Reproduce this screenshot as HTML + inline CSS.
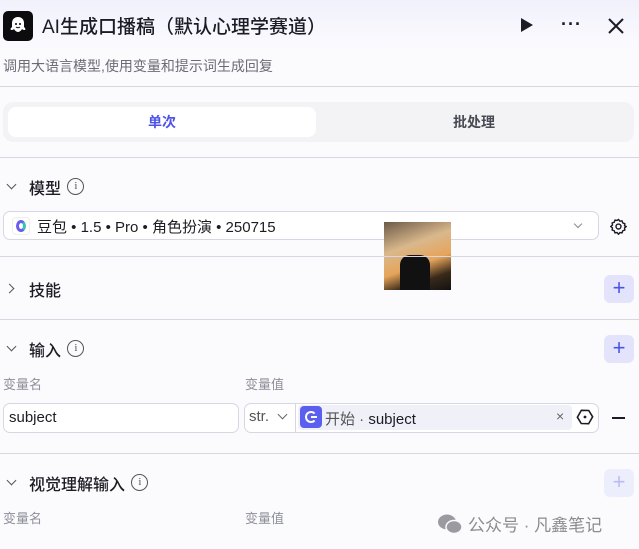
<!DOCTYPE html>
<html><head><meta charset="utf-8"><style>
*{margin:0;padding:0;box-sizing:border-box}
body{width:639px;height:549px;overflow:hidden;background:#fbfbfe;font-family:"Liberation Sans","Noto Sans CJK SC",sans-serif;color:#1d1c24;position:relative}
.a{position:absolute}
.hr{position:absolute;left:0;width:639px;height:1px;background:#d6d7e3}
.sec{font-size:16px;font-weight:500;color:#1d1c24}
.info{display:inline-block;width:17px;height:17px;border:1.3px solid #555;border-radius:50%;font-size:11px;text-align:center;line-height:14px;color:#555;font-family:"Liberation Serif",serif;vertical-align:middle;position:relative;top:-3px;margin-left:2px}
.plus{position:absolute;width:30px;height:28px;border-radius:6px;background:#e3e4fb;color:#4d53e8;font-size:22px;line-height:26px;text-align:center}
.lbl{font-size:13px;color:#8f8f99}
.chev{position:absolute;width:7px;height:7px;border-right:1.8px solid #555;border-bottom:1.8px solid #555}
</style></head><body>
<div class="a" style="left:0;top:0;width:639px;height:50px;background:linear-gradient(#f1f1fc,#fbfbfe)"></div>
<div class="a" style="left:3px;top:11px;width:30px;height:30px;background:#0c0c0f;border-radius:5px"></div>
<svg class="a" style="left:8px;top:15px" width="20" height="22" viewBox="0 0 20 22"><path d="M10 2c-4 0-6 3-6 6v4c-1 1-2 2-1 3 1 0 2 0 3-1 1 2 3 3 4 3s3-1 4-3c1 1 2 1 3 1 1-1 0-2-1-3V8c0-3-2-6-6-6z" fill="#fff"/><circle cx="8" cy="9" r="1" fill="#000"/><circle cx="12" cy="9" r="1" fill="#000"/><path d="M8 12q2 1.5 4 0" stroke="#000" fill="none"/></svg>
<div class="a" style="left:42px;top:12px;font-size:19px;font-weight:500;color:#1d1c24">AI生成口播稿（默认心理学赛道）</div>
<svg class="a" style="left:519px;top:17px" width="16" height="16"><path d="M2 1L14 8L2 15Z" fill="#1d1c24"/></svg>
<div class="a" style="left:561px;top:14px;font-size:18px;letter-spacing:1px;color:#1d1c24;font-weight:bold">···</div>
<svg class="a" style="left:608px;top:18px" width="16" height="16"><path d="M1 1L15 15M15 1L1 15" stroke="#1d1c24" stroke-width="2"/></svg>
<div class="a" style="left:3px;top:56px;font-size:14px;color:#6b6b75">调用大语言模型,使用变量和提示词生成回复</div>
<div class="hr" style="top:86px"></div>
<div class="a" style="left:3px;top:102px;width:631px;height:40px;border-radius:10px;background:#f3f3f6"></div>
<div class="a" style="left:8px;top:107px;width:308px;height:30px;border-radius:8px;background:#fff;text-align:center;line-height:30px;font-size:14px;font-weight:bold;color:#4d53e8">单次</div>
<div class="a" style="left:320px;top:107px;width:308px;height:30px;text-align:center;line-height:30px;font-size:14px;font-weight:bold;color:#4a4a55">批处理</div>
<div class="hr" style="top:157px"></div>
<div class="chev" style="left:8px;top:181px;transform:rotate(45deg)"></div>
<div class="a sec" style="left:29px;top:175px">模型 <span class="info">i</span></div>
<div class="a" style="left:3px;top:211px;width:596px;height:29px;border:1px solid #d6d7e3;border-radius:7px;background:#fff"></div>
<div class="a" style="left:12px;top:217px;width:18px;height:18px;border-radius:4px;background:#fff;border:1px solid #eee"></div>
<div class="a" style="left:16px;top:220px;width:10px;height:12px;border-radius:50%;border:3px solid #6a5cf0;border-right-color:#2fc7b0"></div>
<div class="a" style="left:37px;top:216px;font-size:15px;color:#1d1c24">豆包 • 1.5 • Pro • 角色扮演 • 250715</div>
<div class="chev" style="left:575px;top:221px;width:6px;height:6px;border-width:1px;border-color:#888;transform:rotate(45deg)"></div>
<svg class="a" style="left:610px;top:218px" width="17" height="17" viewBox="0 0 24 24"><path d="M12 2l2 2.5 3-.5 1 3 3 1-.5 3L23 12l-2.5 2 .5 3-3 1-1 3-3-.5L12 23l-2-2.5-3 .5-1-3-3-1 .5-3L1 12l2.5-2-.5-3 3-1 1-3 3 .5z" fill="none" stroke="#1d1c24" stroke-width="2" stroke-linejoin="round"/><circle cx="12" cy="12" r="3.5" fill="none" stroke="#1d1c24" stroke-width="2"/></svg>
<div class="a" style="left:384px;top:222px;width:67px;height:68px;background:linear-gradient(160deg,#6c5a48 0%,#d9b88c 35%,#e6a45a 60%,#3a2a1a 80%,#111 100%)"></div>
<div class="a" style="left:400px;top:255px;width:30px;height:35px;background:#111;border-radius:10px 10px 0 0"></div>
<div class="hr" style="top:256px"></div>
<div class="chev" style="left:6px;top:285px;transform:rotate(-45deg)"></div>
<div class="a sec" style="left:29px;top:277px">技能</div>
<div class="plus" style="left:604px;top:275px">+</div>
<div class="hr" style="top:319px"></div>
<div class="chev" style="left:8px;top:343px;transform:rotate(45deg)"></div>
<div class="a sec" style="left:29px;top:337px">输入 <span class="info">i</span></div>
<div class="plus" style="left:604px;top:335px">+</div>
<div class="a lbl" style="left:3px;top:374px">变量名</div>
<div class="a lbl" style="left:245px;top:374px">变量值</div>
<div class="a" style="left:3px;top:403px;width:236px;height:30px;border:1px solid #d6d7e3;border-radius:7px;background:#fff;font-size:15px;line-height:28px;padding-left:5px">subject</div>
<div class="a" style="left:244px;top:403px;width:355px;height:30px;border:1px solid #d6d7e3;border-radius:7px;background:#fff"></div>
<div class="a" style="left:249px;top:408px;font-size:15px;color:#555">str.</div>
<div class="chev" style="left:279px;top:411px;border-color:#666;border-width:1.3px;transform:rotate(45deg)"></div>
<div class="a" style="left:295px;top:404px;width:1px;height:28px;background:#d6d7e3"></div>
<div class="a" style="left:298px;top:405px;width:274px;height:25px;background:#f0f0f8;border-radius:4px"></div>
<div class="a" style="left:300px;top:406px;width:22px;height:22px;background:#5b5ff0;border-radius:4px"></div>
<div class="a" style="left:305px;top:411px;width:12px;height:12px;border:2.5px solid #fff;border-radius:50%;border-right-color:transparent"></div>
<div class="a" style="left:311px;top:416px;width:6px;height:2px;background:#fff"></div>
<div class="a" style="left:325px;top:408px;font-size:15px"><span style="color:#555">开始 · </span>subject</div>
<div class="a" style="left:556px;top:408px;font-size:14px;color:#666">×</div>
<svg class="a" style="left:576px;top:408px" width="18" height="18"><path d="M9 1.5L15.5 5v8L9 16.5 2.5 13V5z" fill="none" stroke="#1d1c24" stroke-width="1.6" transform="rotate(30 9 9)"/><circle cx="9" cy="9" r="1.4" fill="#1d1c24"/></svg>
<div class="a" style="left:612px;top:417px;width:13px;height:2px;background:#1d1c24"></div>
<div class="hr" style="top:453px"></div>
<div class="chev" style="left:8px;top:477px;transform:rotate(45deg)"></div>
<div class="a sec" style="left:29px;top:471px">视觉理解输入 <span class="info">i</span></div>
<div class="plus" style="left:604px;top:469px;background:#eceefc;color:#b9bcf5">+</div>
<div class="a lbl" style="left:3px;top:508px">变量名</div>
<div class="a lbl" style="left:245px;top:508px">变量值</div>
<svg class="a" style="left:437px;top:513px" width="26" height="22"><ellipse cx="10" cy="9" rx="9" ry="7.5" fill="#9a9aa0"/><ellipse cx="17" cy="14" rx="8" ry="6.5" fill="#9a9aa0" stroke="#fbfbfe" stroke-width="1.5"/></svg>
<div class="a" style="left:468px;top:511px;font-size:17px;color:#8b8b90">公众号 · 凡鑫笔记</div>
</body></html>
